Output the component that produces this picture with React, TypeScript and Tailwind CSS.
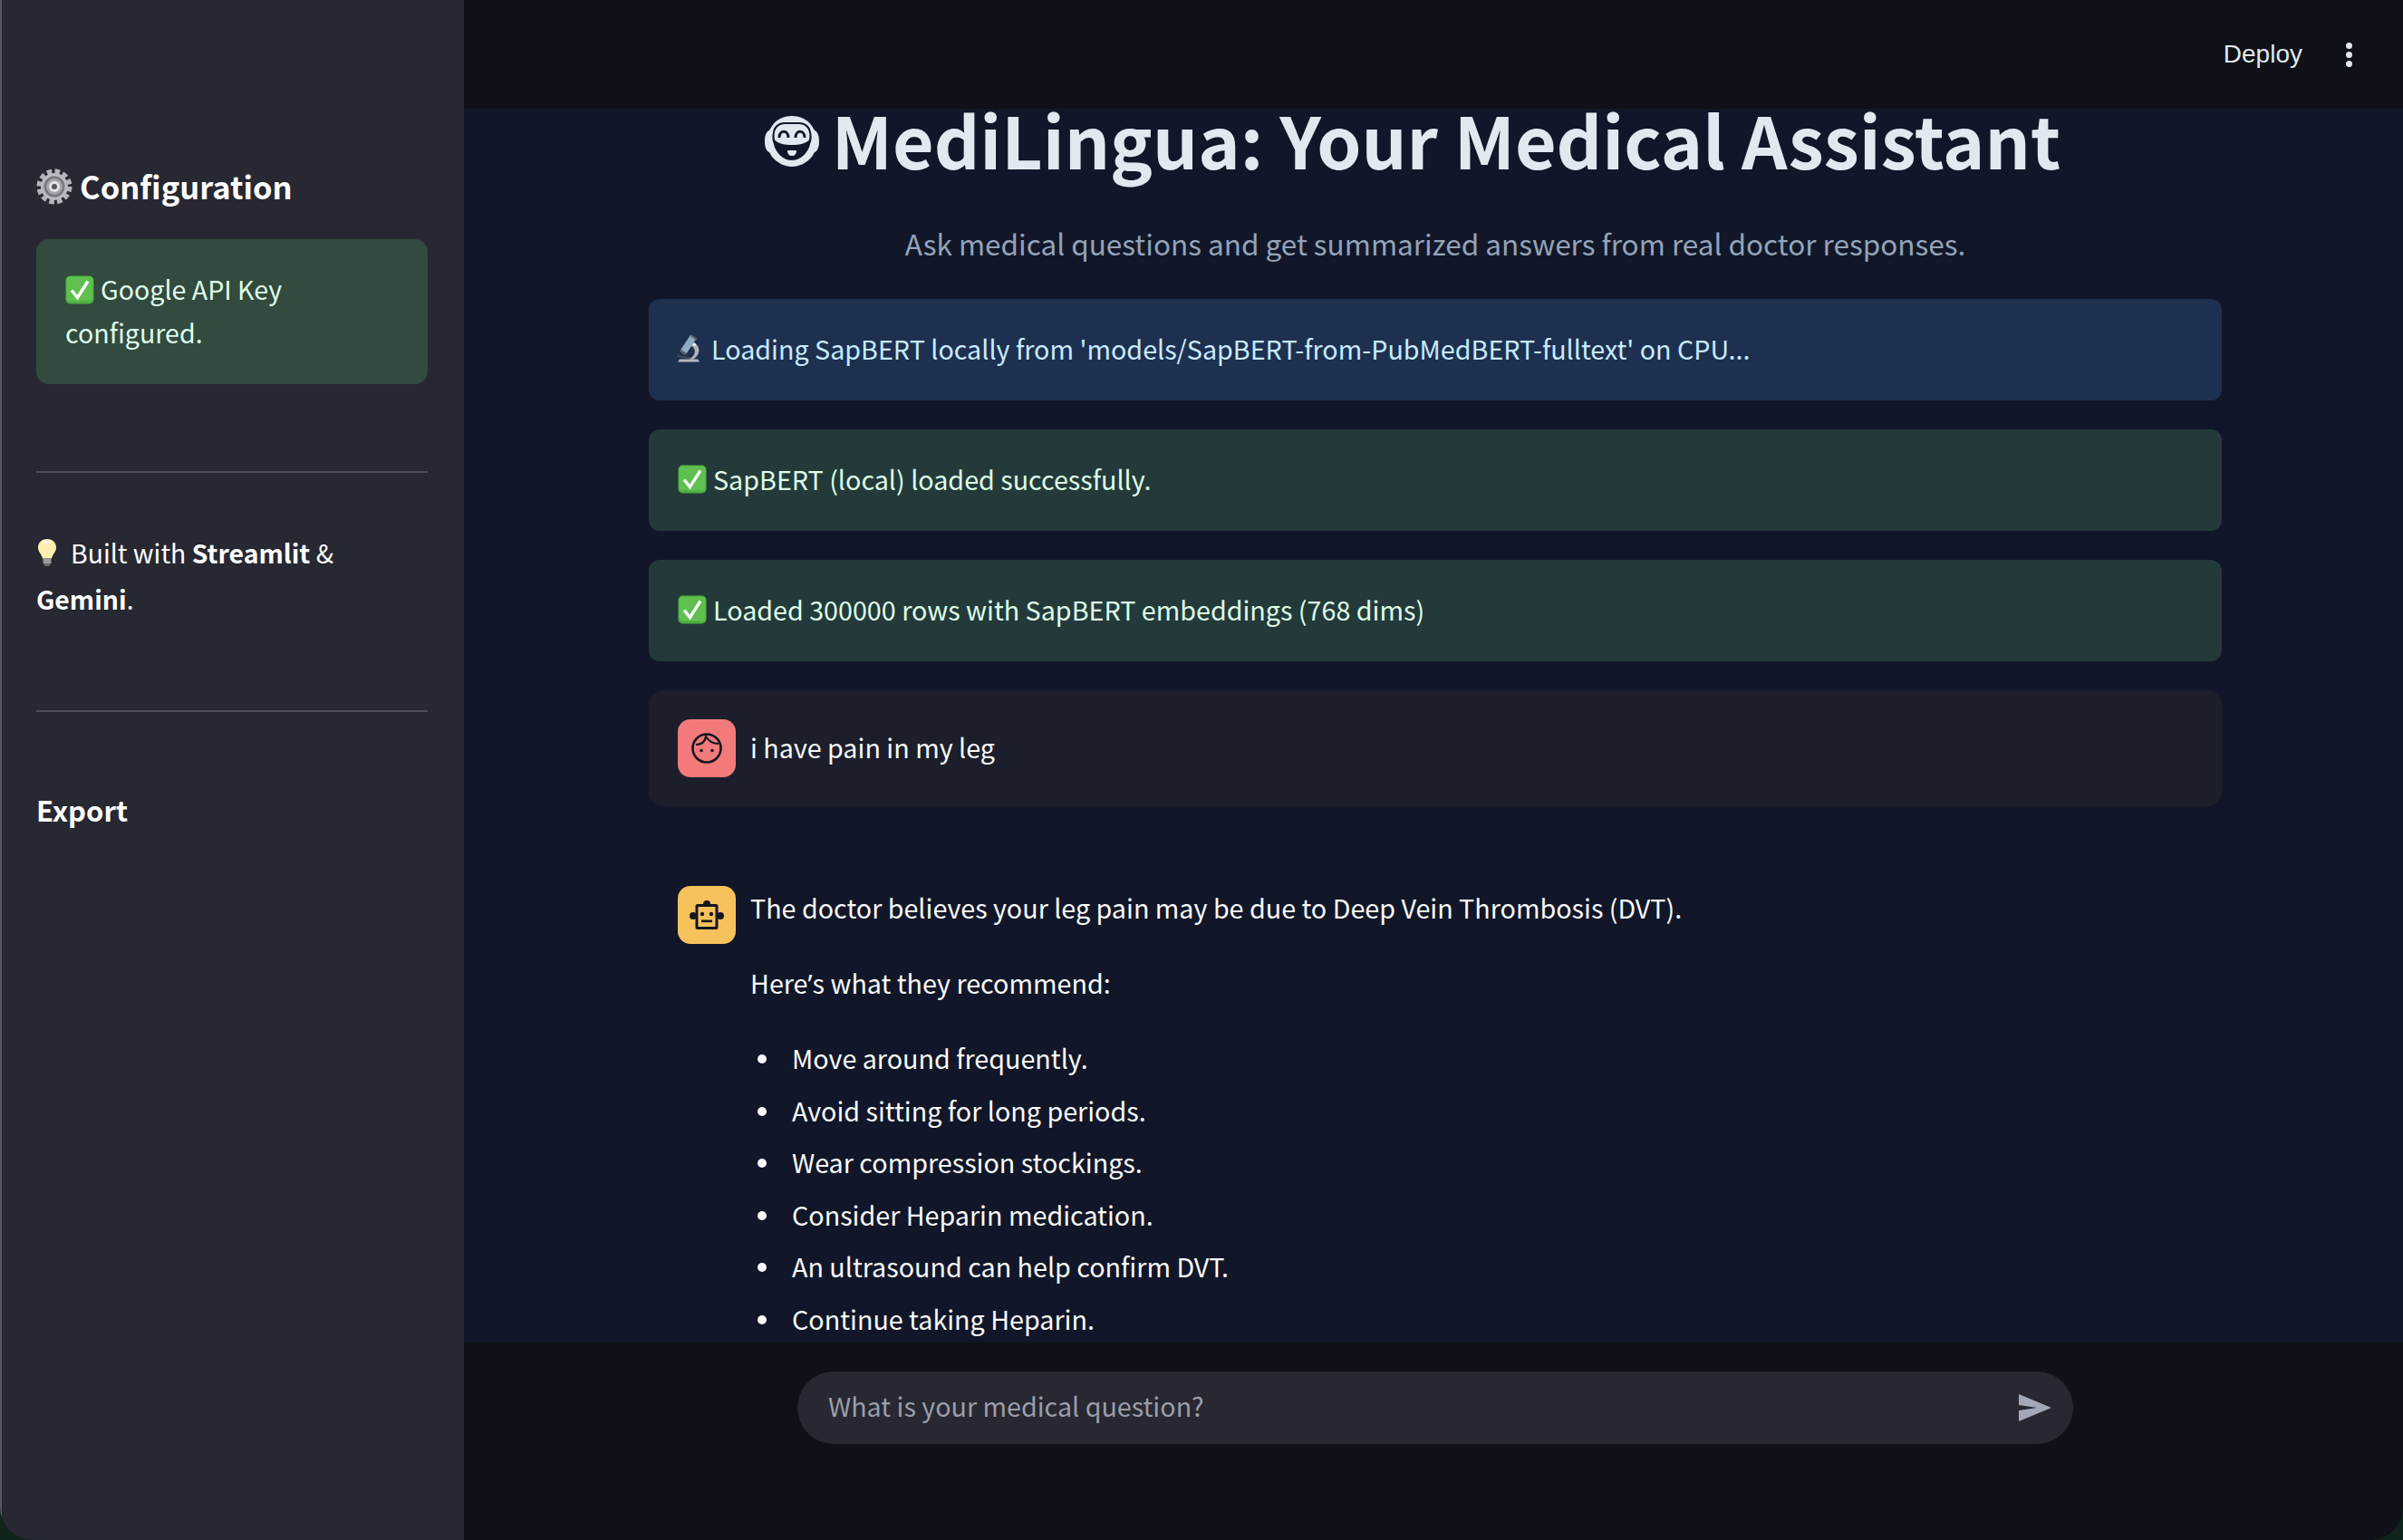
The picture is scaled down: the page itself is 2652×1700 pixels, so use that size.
import { type ReactNode } from 'react';

const BODY_FONT = "font-['Noto_Sans_CJK_SC','Source_Sans_Pro',sans-serif]";

function CheckEmoji() {
  return (
    <svg viewBox="0 0 32 32" className="mr-[7px] inline-block h-8 w-8 shrink-0 align-[-5px]">
      <rect x="0.5" y="0.5" width="31" height="31" rx="5" fill="#4cae3f" />
      <rect x="1.5" y="1.5" width="29" height="27" rx="4" fill="#5fc04f" />
      <path d="M7 16.5l6.5 8L25 6.5" fill="none" stroke="#fff" strokeWidth="3.4" />
    </svg>
  );
}

function GearEmoji() {
  return (
    <svg viewBox="0 0 40 40" className="mr-2 h-10 w-10 shrink-0">
      <circle cx="20" cy="20" r="16.5" fill="none" stroke="#b4b5ba" strokeWidth="6" strokeDasharray="5.4 3.24" />
      <circle cx="20" cy="20" r="15" fill="#b9bac0" />
      <circle cx="20" cy="20" r="11.5" fill="#77787f" />
      <circle cx="20" cy="20" r="9" fill="#a5a6ac" />
      <circle cx="20" cy="20" r="6" fill="#e3e3e6" />
      <circle cx="20" cy="20" r="3" fill="#55565c" />
    </svg>
  );
}

function MicroscopeEmoji() {
  return (
    <svg viewBox="0 0 26 32" className="mr-[12px] h-8 w-[25px] shrink-0">
      <path d="M0 31l2-3h21l2 3z" fill="#b4bac0" />
      <path d="M17 9c6 1 8 6 7 11-.5 3-3 6-6 8h-5c3-2 6-4 6.500-8 .4-3-1-6-4-7z" fill="#aeb4ba" />
      <path d="M0 23.500l14 2.500v1.500L0 25z" fill="#50545a" />
      <path d="M21 4.900L14.400.5 3.400 17.100 10 21.500z" fill="#8fa9c4" />
      <path d="M16 0l6 4-1 2-6.500-4.300z" fill="#5c6269" />
      <path d="M3.400 17.100L10 21.500l-1.500 2L2 19.200z" fill="#5c6269" />
      <circle cx="19" cy="11" r="1.800" fill="#f1f3f5" />
    </svg>
  );
}

function BulbEmoji() {
  return (
    <svg viewBox="0 0 24 32" className="mr-[14px] h-8 w-6 shrink-0">
      <path d="M12 1C6 1 2 5 2 10.500c0 5 4 7 5 12h10c1-5 5-7 5-12C22 5 18 1 12 1z" fill="#fdeeb0" />
      <path d="M6 4c3-2 8-2 11 0-2 3-9 3-11 0z" fill="#fffbe6" />
      <rect x="7.500" y="22.500" width="9" height="6" rx="1" fill="#9b9b9b" />
      <rect x="9" y="28.500" width="6" height="2.500" rx="1" fill="#6f6f6f" />
    </svg>
  );
}

function TitleIcon() {
  return (
    <svg viewBox="0 0 60 56" className="mt-[6px] mr-[14px] h-[56px] w-[60px] shrink-0">
      <path d="M30 0c10 0 17 4 22 11 1 2 2 3 3 5 3 1 5 5 5 12s-2 11-5 12l-3 5C46 52 38 56 30 56S14 52 8 45l-3-5c-3-1-5-5-5-12s2-11 5-12c1-2 2-3 3-5C13 4 20 0 30 0z" fill="#e2e8f0" />
      <path d="M22 7h16c7 0 12 4 13 11 1 4 1 9-1 13-1 7-9 18-20 18S11 38 10 31c-2-4-2-9-1-13C10 11 15 7 22 7z" fill="#111729" />
      <path d="M22 9h16c6 0 10 4 11 9 .6 3 .6 6-.3 9-5 4-11 5-18.700 5s-14-1-18.700-5c-.9-3-.9-6-.3-9C12 13 16 9 22 9z" fill="#e2e8f0" />
      <path d="M16 24c0-9 10-9 10 0M34 24c0-9 10-9 10 0" fill="none" stroke="#111729" strokeWidth="3" />
      <path d="M25 38h10c0 4-2 6-5 6s-5-2-5-6z" fill="#e2e8f0" />
    </svg>
  );
}

function UserFace() {
  return (
    <svg viewBox="0 0 36 36" className="h-9 w-9" fill="none" stroke="#14171f" strokeWidth="2.600">
      <circle cx="18" cy="18" r="15.500" />
      <path d="M6 14c7 0 10-3 11-9 3 5 8 8 14 8" strokeWidth="2.200" />
      <circle cx="12" cy="20.500" r="1.800" fill="#14171f" stroke="none" />
      <circle cx="24" cy="20.500" r="1.800" fill="#14171f" stroke="none" />
    </svg>
  );
}

function RobotFace() {
  return (
    <svg viewBox="0 0 38 32" className="h-8 w-[38px]" fill="#14171f">
      <circle cx="19" cy="4" r="4" />
      <circle cx="4" cy="17" r="4" />
      <circle cx="34" cy="17" r="4" />
      <rect x="6.500" y="4" width="25" height="28" rx="2.500" />
      <rect x="9.500" y="7" width="19" height="22" fill="#f7c25c" />
      <circle cx="14" cy="15" r="2.200" />
      <circle cx="24" cy="15" r="2.200" />
      <rect x="13" y="21.500" width="12" height="2.600" />
    </svg>
  );
}

function Alert({ className, children }: { className: string; children: ReactNode }) {
  return (
    <div className={`flex h-[112px] items-center rounded-[12px] px-8 pb-[2px] ${className}`}>
      {children}
    </div>
  );
}

function Sidebar() {
  return (
    <aside className="flex w-[512px] shrink-0 flex-col border-l-2 border-[#55555f] bg-[#272832] pl-[38px] pr-10 text-white">
      <h2 className="mt-[176px] flex h-[60px] items-center text-[34.5px] font-bold">
        <GearEmoji />
        Configuration
      </h2>
      <div className="mt-[28px] h-[160px] rounded-[14px] bg-[#334a3f] px-8 pt-[31px] text-[28.6px] leading-[48px] text-[#dffde9]">
        <CheckEmoji />
        Google API Key configured.
      </div>
      <hr className="mt-24 border-t-2 border-[#4e4f59]" />
      <div className="mt-[62px] text-[28.4px] leading-[51px]">
        <span className="flex items-center">
          <BulbEmoji />
          <span>
            Built with <b>Streamlit</b> &amp;
          </span>
        </span>
        <b>Gemini</b>.
      </div>
      <hr className="mt-[98px] border-t-2 border-[#4e4f59]" />
      <h3 className="mt-[76px] text-[31px] leading-[64px] font-bold">Export</h3>
    </aside>
  );
}

const steps = [
  'Move around frequently.',
  'Avoid sitting for long periods.',
  'Wear compression stockings.',
  'Consider Heparin medication.',
  'An ultrasound can help confirm DVT.',
  'Continue taking Heparin.',
];

function Messages() {
  return (
    <main className="min-h-0 flex-1 overflow-hidden bg-[#111729]">
      <div className="ml-[204px] w-[1736px] text-[28.7px]">
        <h1 className="flex h-[66px] items-center justify-center pr-[50px] text-[78.7px] font-bold whitespace-nowrap text-[#e2e8f0]">
          <TitleIcon />
          MediLingua: Your Medical Assistant
        </h1>
        <p className="mt-[52px] h-[60px] text-center text-[31.5px] leading-[60px] text-[#94a3b8]">
          Ask medical questions and get summarized answers from real doctor responses.
        </p>
        <div className="mt-[32px] flex flex-col gap-8">
          <Alert className="bg-[#1e3050] text-[#c7ebff]">
            <MicroscopeEmoji />
            Loading SapBERT locally from 'models/SapBERT-from-PubMedBERT-fulltext' on CPU...
          </Alert>
          <Alert className="bg-[#243a3a] text-[#dffde9]">
            <CheckEmoji />
            SapBERT (local) loaded successfully.
          </Alert>
          <Alert className="bg-[#243a3a] text-[#dffde9]">
            <CheckEmoji />
            Loaded 300000 rows with SapBERT embeddings (768 dims)
          </Alert>
          <div className="flex h-[128px] items-center gap-4 rounded-[16px] bg-[#1c1f2b] px-8 text-[#fafafa]">
            <div className="flex h-16 w-16 items-center justify-center rounded-[14px] bg-[#f37a7a]">
              <UserFace />
            </div>
            <span className="pb-[2px]">i have pain in my leg</span>
          </div>
        </div>
        <div className="mt-[88px] flex gap-4 px-8 text-[#fafafa]">
          <div className="flex h-16 w-16 shrink-0 items-center justify-center rounded-[14px] bg-[#f7c25c]">
            <RobotFace />
          </div>
          <div className="-mt-[2px]">
            <p className="h-[51px] leading-[51px]">The doctor believes your leg pain may be due to Deep Vein Thrombosis (DVT).</p>
            <p className="mt-[32px] h-[51px] leading-[51px]">
              Here<span className="font-['Noto_Sans',sans-serif]">’</span>s what they recommend:
            </p>
            <ul className="mt-[32px]">
              {steps.map((step) => (
                <li key={step} className="flex h-[57.6px] items-start leading-[51px]">
                  <span className="mt-[22px] mr-[28px] ml-[8px] h-[10px] w-[10px] shrink-0 rounded-full bg-[#fafafa]" />
                  {step}
                </li>
              ))}
            </ul>
          </div>
        </div>
      </div>
    </main>
  );
}

export default function App() {
  return (
    <div className="h-[1700px] w-[2652px] overflow-hidden bg-[#10241a]">
      <div className={`flex h-full overflow-hidden rounded-b-[36px] ${BODY_FONT}`}>
        <Sidebar />
        <div className="flex min-w-0 flex-1 flex-col bg-[#0e1117]">
          <header className="flex h-[120px] shrink-0 items-center justify-end font-['Liberation_Sans',sans-serif] text-[#e2e8f0]">
            <span className="text-[28px]">Deploy</span>
            <div className="mr-[56px] ml-[48px] flex flex-col gap-[3px]">
              <span className="h-[7px] w-[7px] rounded-full bg-[#e2e8f0]" />
              <span className="h-[7px] w-[7px] rounded-full bg-[#e2e8f0]" />
              <span className="h-[7px] w-[7px] rounded-full bg-[#e2e8f0]" />
            </div>
          </header>
          <Messages />
          <footer className="h-[218px] shrink-0 pt-8">
            <div className="ml-[368px] flex h-20 w-[1408px] items-center justify-between rounded-[40px] bg-[#272832] pr-[24px] pl-[34px] text-[28.7px] text-[#9b9ea8]">
              <span className="pb-[4px]">What is your medical question?</span>
              <svg viewBox="0 0 36 30" className="h-[30px] w-9" fill="#a3a8b8">
                <path d="M0 0l36 15L0 30V18l20-3L0 12z" />
              </svg>
            </div>
          </footer>
        </div>
      </div>
    </div>
  );
}
